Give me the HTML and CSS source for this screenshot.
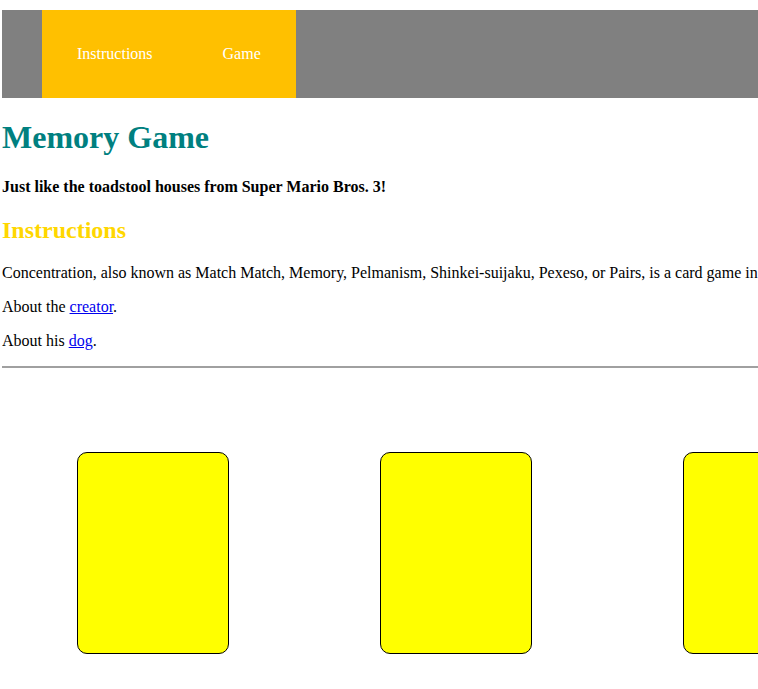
FILE: index.html
```html
<!DOCTYPE html>
<html>
<head>
<meta charset="utf-8">
<title>Memory Game</title>
<link rel="stylesheet" href="styles.css">
</head>
<body>
<nav class="navbar">
  <ul class="nav-list">
    <li><a class="nav-link" href="#instructions">Instructions</a></li>
    <li><a class="nav-link" href="#game">Game</a></li>
  </ul>
</nav>
<h1 class="title">Memory Game</h1>
<h4 class="tagline">Just like the toadstool houses from Super Mario Bros. 3!</h4>
<h2 class="section-title" id="instructions">Instructions</h2>
<p class="intro">Concentration, also known as Match Match, Memory, Pelmanism, Shinkei-suijaku, Pexeso, or Pairs, is a card game in which all of the cards are laid face down on a surface and two cards are flipped face up over each turn.</p>
<p>About the <a href="#">creator</a>.</p>
<p>About his <a href="#">dog</a>.</p>
<hr class="divider">
<div class="board" id="game">
  <div class="cell"><div class="card"></div></div>
  <div class="cell"><div class="card"></div></div>
  <div class="cell"><div class="card"></div></div>
</div>
</body>
</html>
```
FILE: styles.css
```css
html, body {
  overflow: hidden;
}
body {
  margin: 10px 0 0 2px;
  font-family: "Liberation Serif", "Times New Roman", serif;
  font-size: 16px;
  color: #000;
  width: 1200px;
}
.navbar {
  background: #808080;
  height: 88px;
  padding-left: 40px;
  display: flex;
}
.nav-list {
  list-style: none;
  margin: 0;
  padding: 0;
  display: flex;
  background: #ffc000;
}
.nav-list li {
  display: flex;
}
.nav-link {
  display: flex;
  align-items: center;
  padding: 0 35px;
  color: #fff;
  text-decoration: none;
}
.title {
  color: #008080;
  font-size: 32px;
  margin: 21.44px 0;
}
.tagline {
  font-size: 16px;
  margin: 21.28px 0;
}
.section-title {
  color: #ffd700;
  font-size: 24px;
  margin: 19.92px 0;
}
p {
  margin: 16px 0;
}
.intro {
  white-space: nowrap;
}
a {
  color: #0000ee;
}
.divider {
  margin: 14px 0 0;
  border: 0;
  border-top: 2px solid #a0a0a0;
}
.board {
  display: grid;
  grid-template-columns: repeat(3, 303px);
  padding-top: 84px;
}
.cell {
  display: flex;
  padding-left: 75px;
}
.card {
  width: 150px;
  height: 200px;
  background: #ffff00;
  border: 1px solid #000;
  border-radius: 10px;
}
```
